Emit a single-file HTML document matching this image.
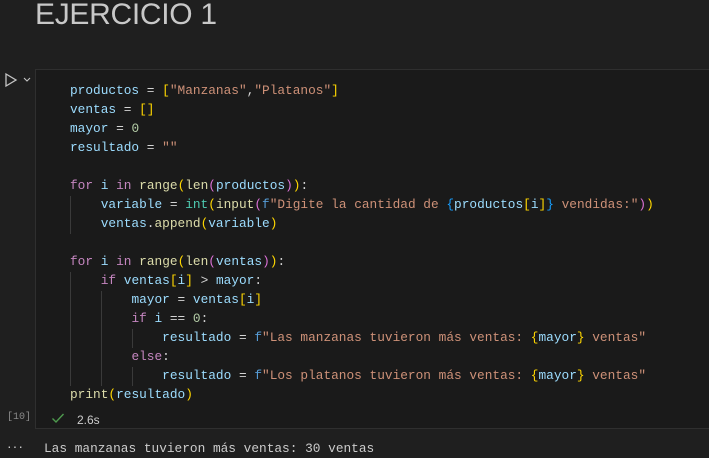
<!DOCTYPE html>
<html><head><style>
body{margin:0;width:709px;height:458px;background:#1f1f1f;overflow:hidden;position:relative;font-family:"Liberation Sans",sans-serif}
.title{position:absolute;left:35px;top:-2px;font-size:30px;color:#c8c8c8;letter-spacing:-0.3px}
.cell{position:absolute;left:35px;top:69px;width:700px;height:360px;border:1px solid #2f2f2f;background:#1a1a1a;box-sizing:border-box}
.code{position:absolute;left:70px;top:81px;font-family:"Liberation Mono",monospace;font-size:12.8px;line-height:19px;color:#d4d4d4;white-space:pre}
.g{position:absolute;width:1px;background:#3a3a3a}
.k{color:#c586c0}.v{color:#9cdcfe}.f{color:#dcdcaa}.s{color:#ce9178}.t{color:#4ec9b0}.n{color:#b5cea8}.b{color:#569cd6}
.y{color:#ffd700}.p{color:#da70d6}.c{color:#179fff}
.mono{font-family:"Liberation Mono",monospace}
</style></head><body>
<div class="title">EJERCICIO 1</div>
<svg style="position:absolute;left:4px;top:72px" width="30" height="16"><path d="M2 2 L12 8 L2 14 Z" fill="none" stroke="#c5c5c5" stroke-width="1.3"/><path d="M20 6 L23 9 L26 6" fill="none" stroke="#c5c5c5" stroke-width="1.1"/></svg>
<div class="cell"></div>
<div class="g" style="left:70px;top:196px;height:38px"></div>
<div class="g" style="left:70px;top:272px;height:114px"></div>
<div class="g" style="left:101px;top:291px;height:95px"></div>
<div class="g" style="left:132px;top:329px;height:19px"></div>
<div class="g" style="left:132px;top:367px;height:19px"></div>
<div class="code"><span class="v">productos</span> = <span class="y">[</span><span class="s">"Manzanas"</span>,<span class="s">"Platanos"</span><span class="y">]</span>
<span class="v">ventas</span> = <span class="y">[]</span>
<span class="v">mayor</span> = <span class="n">0</span>
<span class="v">resultado</span> = <span class="s">""</span>

<span class="k">for</span> <span class="v">i</span> <span class="k">in</span> <span class="f">range</span><span class="y">(</span><span class="f">len</span><span class="p">(</span><span class="v">productos</span><span class="p">)</span><span class="y">)</span>:
    <span class="v">variable</span> = <span class="t">int</span><span class="y">(</span><span class="f">input</span><span class="p">(</span><span class="b">f</span><span class="s">"Digite la cantidad de </span><span class="c">{</span><span class="v">productos</span><span class="y">[</span><span class="v">i</span><span class="y">]</span><span class="c">}</span><span class="s"> vendidas:"</span><span class="p">)</span><span class="y">)</span>
    <span class="v">ventas</span>.<span class="f">append</span><span class="y">(</span><span class="v">variable</span><span class="y">)</span>

<span class="k">for</span> <span class="v">i</span> <span class="k">in</span> <span class="f">range</span><span class="y">(</span><span class="f">len</span><span class="p">(</span><span class="v">ventas</span><span class="p">)</span><span class="y">)</span>:
    <span class="k">if</span> <span class="v">ventas</span><span class="y">[</span><span class="v">i</span><span class="y">]</span> &gt; <span class="v">mayor</span>:
        <span class="v">mayor</span> = <span class="v">ventas</span><span class="y">[</span><span class="v">i</span><span class="y">]</span>
        <span class="k">if</span> <span class="v">i</span> == <span class="n">0</span>:
            <span class="v">resultado</span> = <span class="b">f</span><span class="s">"Las manzanas tuvieron más ventas: </span><span class="y">{</span><span class="v">mayor</span><span class="y">}</span><span class="s"> ventas"</span>
        <span class="k">else</span>:
            <span class="v">resultado</span> = <span class="b">f</span><span class="s">"Los platanos tuvieron más ventas: </span><span class="y">{</span><span class="v">mayor</span><span class="y">}</span><span class="s"> ventas"</span>
<span class="f">print</span><span class="y">(</span><span class="v">resultado</span><span class="y">)</span></div>
<div class="mono" style="position:absolute;left:7px;top:412px;font-size:10px;color:#8a8a8a">[10]</div>
<svg style="position:absolute;left:51px;top:412px" width="14" height="12"><path d="M1.5 6.5 L5 10 L12.5 2" fill="none" stroke="#4e9a4e" stroke-width="1.4"/></svg>
<div style="position:absolute;left:77px;top:413px;font-size:12px;color:#cccccc">2.6s</div>
<div style="position:absolute;left:7px;top:438px;font-size:14px;color:#cccccc;letter-spacing:1px">···</div>
<div class="mono" style="position:absolute;left:44px;top:441px;font-size:12.8px;color:#cccccc;white-space:pre">Las manzanas tuvieron más ventas: 30 ventas</div>
</body></html>
